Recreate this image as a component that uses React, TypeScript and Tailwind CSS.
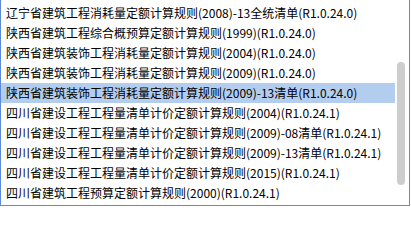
const items = [
  "辽宁省建筑工程消耗量定额计算规则(2008)-13全统清单(R1.0.24.0)",
  "陕西省建筑工程综合概预算定额计算规则(1999)(R1.0.24.0)",
  "陕西省建筑装饰工程消耗量定额计算规则(2004)(R1.0.24.0)",
  "陕西省建筑装饰工程消耗量定额计算规则(2009)(R1.0.24.0)",
  "陕西省建筑装饰工程消耗量定额计算规则(2009)-13清单(R1.0.24.0)",
  "四川省建设工程工程量清单计价定额计算规则(2004)(R1.0.24.1)",
  "四川省建设工程工程量清单计价定额计算规则(2009)-08清单(R1.0.24.1)",
  "四川省建设工程工程量清单计价定额计算规则(2009)-13清单(R1.0.24.1)",
  "四川省建设工程工程量清单计价定额计算规则(2015)(R1.0.24.1)",
  "四川省建筑工程预算定额计算规则(2000)(R1.0.24.1)",
];

export default function App() {
  const selected = 4;
  return (
    <div className="w-[411px] h-[206px] bg-white">
      <div className="flex w-[410px] h-[206px] border-l border-r border-b border-[#5b8ad6] overflow-hidden">
        {/* list */}
        <div className="w-[394px] pt-[3px]">
          {items.map((t, i) => (
            <div
              key={i}
              className={
                "h-[20px] flex items-center pl-[5px] whitespace-nowrap text-[12px] text-black " +
                (i === selected ? "bg-[#b3cdee]" : "")
              }
              style={{ fontFamily: '"Noto Sans CJK SC", "Noto Sans", sans-serif' }}
            >
              {t}
            </div>
          ))}
        </div>
        {/* scrollbar */}
        <div className="flex-1 pl-[2px] pt-[62px]">
          <div className="w-[8px] h-[123px] rounded-full bg-[#cdcdcd]" />
        </div>
      </div>
    </div>
  );
}
